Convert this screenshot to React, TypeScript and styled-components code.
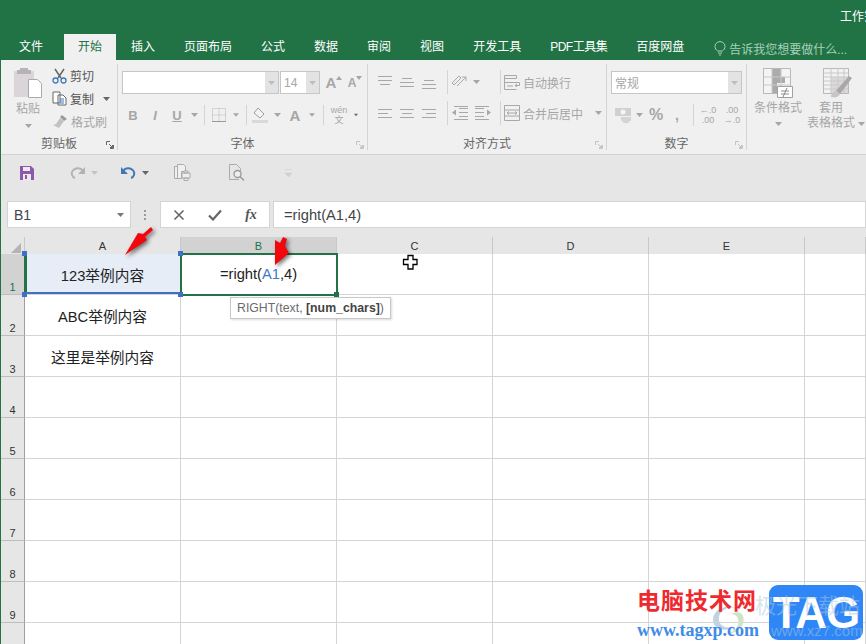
import React from 'react';
import styled, { createGlobalStyle } from 'styled-components';

const GlobalStyle = createGlobalStyle`
  html, body { margin: 0; padding: 0; background: #fff; overflow: hidden; }
  * { box-sizing: border-box; }
`;

const FONT = `"Liberation Sans", "Noto Sans CJK SC", sans-serif`;
const GREEN = '#217346';
const GRAY = '#a6a6a6';

const Page = styled.div`
  position: relative;
  width: 866px;
  height: 644px;
  overflow: hidden;
  background: #fff;
  font-family: ${FONT};
  border-left: 1px solid ${GREEN};
`;

const TitleBar = styled.div`
  height: 34px;
  background: ${GREEN};
  color: #fff;
  font-size: 12px;
  line-height: 34px;
  padding-left: 839px;
  white-space: nowrap;
  overflow: hidden;
`;

const TabBar = styled.div`
  height: 26px;
  background: ${GREEN};
  display: flex;
  gap: 1px;
  padding-left: 4px;
  align-items: stretch;
`;

const Tab = styled.div<{ $active?: boolean; $first?: boolean; $tight?: boolean }>`
  padding: 2px 14px 0;
  margin-right: ${(p) => (p.$first ? '6px' : '0')};
  font-size: 12px;
  line-height: 22px;
  white-space: nowrap;
  letter-spacing: ${(p) => (p.$tight ? '-0.5px' : '0')};
  color: ${(p) => (p.$active ? GREEN : '#fff')};
  background: ${(p) => (p.$active ? '#f0f0f0' : 'transparent')};
`;

const TellMe = styled.div`
  margin-left: 15px;
  display: flex;
  align-items: center;
  gap: 3px;
  padding-top: 2px;
  font-size: 12px;
  color: #a7d0ba;
  white-space: nowrap;
`;

const Ribbon = styled.div`
  height: 95px;
  background: #f0f0f0;
  border-bottom: 1px solid #d2d2d2;
  display: flex;
  padding-top: 4px;
`;

const Group = styled.div<{ $w: number }>`
  position: relative;
  flex: none;
  width: ${(p) => p.$w}px;
  height: 86px;
  border-right: 1px solid #d4d4d4;
  display: flex;
  flex-direction: column;
`;

const GroupBody = styled.div`
  flex: 1;
  display: flex;
  min-height: 0;
`;

const GroupLabel = styled.div`
  height: 14px;
  line-height: 16px;
  text-align: center;
  font-size: 12px;
  color: #666;
`;

const Launcher = styled.svg`
  position: absolute;
  right: 3px;
  bottom: 1px;
`;

const Column = styled.div<{ $w?: number; $pad?: number }>`
  display: flex;
  flex-direction: column;
  align-items: ${(p) => (p.$w ? 'center' : 'flex-start')};
  width: ${(p) => (p.$w ? `${p.$w}px` : 'auto')};
  padding-left: ${(p) => p.$pad ?? 0}px;
`;

const SmallRow = styled.div`
  height: 23px;
  display: flex;
  align-items: center;
  gap: 3px;
  font-size: 12px;
  color: ${GRAY};
  white-space: nowrap;
`;

const DarkLabel = styled.span`
  color: #555;
`;

const BigLabel = styled.div<{ $shift?: number }>`
  font-size: 12px;
  line-height: 15px;
  color: ${GRAY};
  text-align: center;
  white-space: nowrap;
  margin-right: ${(p) => p.$shift ?? 0}px;
`;

const Stack = styled.div<{ $top: number; $left: number; $gap: number }>`
  display: flex;
  flex-direction: column;
  gap: ${(p) => p.$gap}px;
  padding: ${(p) => p.$top}px 0 0 ${(p) => p.$left}px;
`;

const ToolRow = styled.div<{ $h?: number }>`
  height: ${(p) => p.$h ?? 22}px;
  display: flex;
  align-items: center;
`;

const Tool = styled.div<{ $w: number }>`
  flex: none;
  width: ${(p) => p.$w}px;
  display: flex;
  align-items: center;
  justify-content: center;
  color: ${GRAY};
  font-size: 12px;
  white-space: nowrap;
`;

const ToolText = styled.div<{ $w: number }>`
  flex: none;
  width: ${(p) => p.$w}px;
  color: ${GRAY};
  font-size: 12px;
  white-space: nowrap;
`;

const Letter = styled.span<{ $italic?: boolean; $under?: boolean; $size?: number }>`
  font-family: ${FONT};
  font-weight: 700;
  font-size: ${(p) => p.$size ?? 12}px;
  font-style: ${(p) => (p.$italic ? 'italic' : 'normal')};
  text-decoration: ${(p) => (p.$under ? 'underline' : 'none')};
  color: ${GRAY};
`;

const Wen = styled.div`
  font-size: 9px;
  line-height: 10px;
  text-align: center;
  color: ${GRAY};
  white-space: nowrap;
`;

const Sep = styled.div<{ $h?: number }>`
  flex: none;
  width: 1px;
  height: ${(p) => p.$h ?? 20}px;
  background: #d4d4d4;
`;

const Combo = styled.div<{ $w: number }>`
  flex: none;
  width: ${(p) => p.$w}px;
  height: 23px;
  background: #fff;
  border: 1px solid #c6c6c6;
  display: flex;
  align-items: center;
  justify-content: space-between;
  font-size: 12px;
  color: ${GRAY};
  padding-left: 3px;
`;

const ComboBtn = styled.div`
  width: 13px;
  height: 100%;
  flex: none;
  background: #e3e3e3;
  display: flex;
  align-items: center;
  justify-content: center;
`;

const QuickBar = styled.div`
  height: 45px;
  background: #e6e6e6;
  display: flex;
  align-items: flex-start;
  padding-top: 9px;
`;

const QuickSlot = styled.div<{ $left: number }>`
  margin-left: ${(p) => p.$left}px;
  height: 17px;
  display: flex;
  align-items: center;
  gap: 6px;
`;

const FormulaRow = styled.div`
  height: 37px;
  background: #e6e6e6;
  display: flex;
  align-items: flex-start;
  padding: 1px 0 0 6px;
`;

const FieldBox = styled.div<{ $w?: number; $ml: number }>`
  height: 27px;
  background: #fff;
  border: 1px solid #d4d4d4;
  margin-left: ${(p) => p.$ml}px;
  flex: ${(p) => (p.$w ? 'none' : '1')};
  width: ${(p) => (p.$w ? `${p.$w}px` : 'auto')};
  display: flex;
  align-items: center;
  font-size: 14px;
  color: #444;
`;

const NameText = styled.span`
  flex: 1;
  padding-left: 6px;
`;

const FormulaText = styled.span`
  padding-left: 10px;
  font-size: 14.7px;
`;

const Dots = styled.div`
  margin-left: 13px;
  height: 27px;
  display: flex;
  flex-direction: column;
  justify-content: center;
  gap: 2px;
  i {
    display: block;
    width: 2px;
    height: 2px;
    background: #9a9a9a;
  }
`;

const FxBtn = styled.div`
  width: 36px;
  display: flex;
  justify-content: center;
  color: #666;
`;

const Fx = styled.span`
  font-family: "Liberation Serif", serif;
  font-style: italic;
  font-weight: 700;
  font-size: 14px;
  color: #555;
`;

const Sheet = styled.div`
  display: grid;
  grid-template-columns: 24px repeat(5, 156px) 1fr;
  grid-template-rows: 17px;
  grid-auto-rows: 41px;
  background: #fff;
`;

const HeaderRow = styled.div`
  grid-column: 1 / -1;
  display: grid;
  grid-template-columns: 24px repeat(5, 156px) 1fr;
  background: #e6e6e6;
`;

const Corner = styled.div`
  border-bottom: 1px solid #9f9f9f;
  border-right: 1px solid #c8c8c8;
  display: flex;
  align-items: flex-end;
  justify-content: flex-end;
  padding: 0 3px 2px 0;
`;

const ColHead = styled.div<{ $on?: boolean }>`
  border-right: 1px solid #c8c8c8;
  border-bottom: 1px solid ${(p) => (p.$on ? GREEN : '#9f9f9f')};
  background: ${(p) => (p.$on ? '#d2d2d2' : '#e6e6e6')};
  color: ${(p) => (p.$on ? GREEN : '#333')};
  font-size: 11px;
  line-height: 18px;
  text-align: center;
`;

const RowHead = styled.div<{ $on?: boolean }>`
  background: ${(p) => (p.$on ? '#d2d2d2' : '#e6e6e6')};
  color: ${(p) => (p.$on ? GREEN : '#333')};
  border-right: 1px solid ${(p) => (p.$on ? GREEN : '#9f9f9f')};
  border-bottom: 1px solid #bdbdbd;
  font-size: 11px;
  text-align: center;
  display: flex;
  align-items: flex-end;
  justify-content: center;
  padding-bottom: 1px;
`;

const Cell = styled.div<{ $tone?: 'source' | 'edit' }>`
  position: relative;
  border-right: 1px solid #d4d4d4;
  border-bottom: 1px solid #d4d4d4;
  display: flex;
  align-items: center;
  justify-content: center;
  font-size: 14.7px;
  color: #222;
  white-space: nowrap;
  background: ${(p) => (p.$tone === 'source' ? '#e6edf7' : '#fff')};
  ${(p) =>
    p.$tone === 'source' &&
    `box-shadow: inset 2px 0 0 ${GREEN}, inset 0 -2px 0 #3f70c4;`}
  ${(p) => p.$tone === 'edit' && `outline: 2px solid ${GREEN}; outline-offset: -1px; z-index: 1;`}
`;

const Handle = styled.i<{ $x: 'left' | 'right'; $y: 'top' | 'bottom'; $color: string }>`
  position: absolute;
  ${(p) => p.$x}: -3px;
  ${(p) => p.$y}: -3px;
  width: 5px;
  height: 5px;
  background: ${(p) => p.$color};
  z-index: 2;
`;

const Ref = styled.span`
  color: #3f78cf;
`;

const Tooltip = styled.div`
  position: absolute;
  left: 229px;
  top: 297px;
  width: 161px;
  height: 22px;
  background: #fff;
  border: 1px solid #c8c8c8;
  box-shadow: 1px 1px 2px rgba(0, 0, 0, 0.15);
  font-size: 12.3px;
  line-height: 20px;
  padding-left: 6px;
  color: #6b6b6b;
  white-space: nowrap;
  z-index: 5;
  b {
    color: #444;
  }
`;

const Overlay = styled.svg<{ $x: number; $y: number; $shadow?: boolean }>`
  position: absolute;
  left: ${(p) => p.$x - 1}px;
  top: ${(p) => p.$y}px;
  z-index: 6;
  overflow: visible;
  ${(p) => p.$shadow && 'filter: drop-shadow(2px 2px 2px rgba(0, 0, 0, 0.55));'}
`;

const Watermark = styled.div`
  position: absolute;
  left: 636px;
  top: 585px;
  width: 226px;
  height: 56px;
  display: flex;
  z-index: 6;
`;

const WmText = styled.div`
  position: relative;
  width: 132px;
  flex: none;
`;

const WmTitle = styled.div`
  position: relative;
  margin-top: 2px;
  font-size: 23px;
  line-height: 28px;
  font-weight: 700;
  color: #ee2a2f;
  letter-spacing: 1px;
  white-space: nowrap;
`;

const WmUrl = styled.div`
  position: relative;
  margin-top: 4px;
  font-family: "Liberation Serif", serif;
  font-size: 18px;
  line-height: 22px;
  font-weight: 700;
  color: #3f8be8;
  white-space: nowrap;
`;

const WmSwirl = styled.svg`
  position: absolute;
  left: 72px;
  top: 15px;
`;

const WmGhost = styled.div<{ $left: number; $top: number; $size: number }>`
  position: absolute;
  left: ${(p) => p.$left}px;
  top: ${(p) => p.$top}px;
  font-size: ${(p) => p.$size}px;
  line-height: 1;
  color: rgba(170, 200, 220, 0.5);
  white-space: nowrap;
  z-index: 1;
`;

const Badge = styled.div`
  width: 94px;
  height: 55px;
  border-radius: 9px;
  background: #2f86f7;
  color: #fff;
  font-size: 44px;
  line-height: 55px;
  font-weight: 700;
  text-align: center;
  letter-spacing: -1px;
`;

const Caret = ({ c = GRAY }: { c?: string }) => (
  <svg width="7" height="4" viewBox="0 0 7 4"><path d="M0 0h7L3.5 4z" fill={c} /></svg>
);

const Lines = ({ w = [14, 14, 14], y = [2, 6, 10], c = '#a8a8a8', x = 0 }: { w?: number[]; y?: number[]; c?: string; x?: number | number[] }) => (
  <svg width="16" height="14" viewBox="0 0 16 14">
    {w.map((len, i) => {
      const left = Array.isArray(x) ? x[i] : x;
      return <path key={i} d={`M${left} ${y[i] + 0.5}h${len}`} stroke={c} fill="none" />;
    })}
  </svg>
);

const LaunchIcon = ({ c = '#8c8c8c' }: { c?: string }) => (
  <Launcher width="8" height="8" viewBox="0 0 8 8">
    <path d="M.5 4V.5H4M7.5 4v3.5H4M3 3l3.5 3.5M4 6.5h2.5V4" stroke={c} fill="none" />
  </Launcher>
);

const Indent = ({ flip }: { flip?: boolean }) => (
  <svg width="16" height="14" viewBox="0 0 16 14" style={flip ? { transform: 'scaleX(-1)' } : undefined}>
    <path d="M7 2.5h9M7 6.5h9M7 10.5h9M2 13.5h14M2 .5h14" stroke="#a8a8a8" fill="none" />
    <path d="M0 6.5l4-3v6z" fill="#a8a8a8" />
  </svg>
);

const tabs = ['插入', '页面布局', '公式', '数据', '审阅', '视图', '开发工具', 'PDF工具集', '百度网盘'];
const columns = ['A', 'B', 'C', 'D', 'E', ''];
const rows = [1, 2, 3, 4, 5, 6, 7, 8, 9, 10];
const firstColumn: Record<number, string> = { 1: '123举例内容', 2: 'ABC举例内容', 3: '这里是举例内容' };

export default function App() {
  return (
    <Page>
      <GlobalStyle />
      <TitleBar>工作簿1 - Excel</TitleBar>
      <TabBar>
        <Tab $first>文件</Tab>
        <Tab $active>开始</Tab>
        {tabs.map((t) => <Tab key={t} $tight={t.startsWith('PDF')}>{t}</Tab>)}
        <TellMe>
          <svg width="12" height="15" viewBox="0 0 12 15">
            <path d="M3.5 10C2 8.8 1 7.4 1 5.6a5 5 0 0 1 10 0c0 1.8-1 3.200-2.500 4.400zM4 12h4M5 14h2" stroke="#a7d0ba" fill="none" />
          </svg>
          告诉我您想要做什么...
        </TellMe>
      </TabBar>

      <Ribbon>
        <Group $w={117}>
          <GroupBody>
            <Column $w={48} $pad={0}>
              <svg width="30" height="32" viewBox="0 0 30 32" style={{ marginTop: 3, marginLeft: 6 }}>
                <path d="M1 4h20v26H1z" fill="#d9d5d8" />
                <path d="M7 1h8v2h3v4H4V3h3z" fill="#b6b2b5" />
                <path d="M15.500 12.500h9l4 4v14h-13z" fill="#fff" stroke="#aaa" />
              </svg>
              <BigLabel style={{ marginTop: 3, marginLeft: 6 }}>粘贴</BigLabel>
              <div style={{ marginTop: 6, marginLeft: 6, lineHeight: 0 }}><Caret /></div>
            </Column>
            <Column $pad={3}>
              <SmallRow>
                <svg width="15" height="16" viewBox="0 0 15 16">
                  <path d="M3 1l6 9M12 1L6 10" stroke="#666" strokeWidth="1.500" fill="none" />
                  <circle cx="3.500" cy="12.500" r="2.500" stroke="#3f78b8" strokeWidth="1.300" fill="none" />
                  <circle cx="11.500" cy="12.500" r="2.500" stroke="#3f78b8" strokeWidth="1.300" fill="none" />
                </svg>
                <DarkLabel>剪切</DarkLabel>
              </SmallRow>
              <SmallRow>
                <svg width="15" height="15" viewBox="0 0 15 15">
                  <path d="M1 1h7v11H1zM6 4h5l3 3v7H6z" fill="#fff" stroke="#666" />
                  <path d="M8 8h4M8 10h4M8 12h4" stroke="#3f78b8" />
                </svg>
                <DarkLabel>复制</DarkLabel>
                <span style={{ marginLeft: 6, lineHeight: 0 }}><Caret c="#666" /></span>
              </SmallRow>
              <SmallRow>
                <svg width="16" height="15" viewBox="0 0 16 15">
                  <path d="M10 1l5 4-3 2-4-4z" fill="#9a9a9a" />
                  <path d="M8 4l4 3-5 7-6-3 3-1z" fill="#c2c2c2" />
                </svg>
                格式刷
              </SmallRow>
            </Column>
          </GroupBody>
          <GroupLabel>剪贴板</GroupLabel>
          <LaunchIcon c="#666" />
        </Group>

        <Group $w={250}>
          <GroupBody>
            <Stack $top={7} $left={4} $gap={10}>
              <ToolRow $h={23}>
                <Combo $w={157}><span /><ComboBtn><Caret c="#bdbdbd" /></ComboBtn></Combo>
                <Combo $w={40} style={{ marginLeft: 1 }}>
                  <span>14</span><ComboBtn><Caret c="#bdbdbd" /></ComboBtn>
                </Combo>
                <Tool $w={22} style={{ marginLeft: 3 }}>
                  <Letter $size={15}>A</Letter>
                  <svg width="6" height="4" viewBox="0 0 6 4" style={{ marginBottom: 10 }}><path d="M0 4l3-4 3 4z" fill={GRAY} /></svg>
                </Tool>
                <Tool $w={20}>
                  <Letter $size={12}>A</Letter>
                  <svg width="6" height="4" viewBox="0 0 6 4" style={{ marginBottom: 10 }}><path d="M0 0h6L3 4z" fill={GRAY} /></svg>
                </Tool>
              </ToolRow>
              <ToolRow>
                <Tool $w={22}><Letter $size={13}>B</Letter></Tool>
                <Tool $w={22}><Letter $size={13} $italic>I</Letter></Tool>
                <Tool $w={22}><Letter $size={13} $under>U</Letter></Tool>
                <Tool $w={12}><Caret /></Tool>
                <Tool $w={4} /><Sep />
                <Tool $w={28}>
                  <svg width="14" height="14" viewBox="0 0 14 14">
                    <path d="M.5.5h13v13H.5zM7 .5v13M.5 7h13" stroke="#b5b5b5" strokeDasharray="1 1" fill="none" />
                    <path d="M0 13.500h14" stroke="#999" />
                  </svg>
                </Tool>
                <Tool $w={6}><Caret /></Tool>
                <Tool $w={7} /><Sep />
                <Tool $w={26}>
                  <svg width="16" height="16" viewBox="0 0 16 16">
                    <path d="M6 1l6 6-4 4-6-5z" fill="#f4f4f4" stroke="#9c9c9c" />
                    <path d="M0 13h16v3H0z" fill="#d9d9d9" />
                  </svg>
                </Tool>
                <Tool $w={8}><Caret /></Tool>
                <Tool $w={28}><Letter $size={15}>A</Letter></Tool>
                <Tool $w={6}><Caret /></Tool>
                <Tool $w={8} /><Sep />
                <Tool $w={30}><Wen>wén<br />文</Wen></Tool>
                <Tool $w={4}><Caret c="#666" /></Tool>
              </ToolRow>
            </Stack>
          </GroupBody>
          <GroupLabel>字体</GroupLabel>
          <LaunchIcon c="#c4c4c4" />
        </Group>

        <Group $w={239}>
          <GroupBody>
            <Stack $top={5} $left={7} $gap={5}>
              <ToolRow $h={26}>
                <Tool $w={22}><Lines y={[1, 5, 9]} w={[14, 14, 10]} x={[0, 0, 2]} /></Tool>
                <Tool $w={22}><Lines y={[3, 7, 11]} w={[10, 14, 14]} x={[2, 0, 0]} /></Tool>
                <Tool $w={22}><Lines y={[5, 9, 13]} w={[10, 14, 14]} x={[2, 0, 0]} /></Tool>
                <Tool $w={6} /><Sep $h={24} />
                <Tool $w={24}>
                  <svg width="18" height="16" viewBox="0 0 18 16">
                    <path d="M1 9l7-7 2 2-7 7zM6 12l9-9M11 3h4v4" stroke="#a8a8a8" fill="none" />
                  </svg>
                </Tool>
                <Tool $w={8}><Caret /></Tool>
                <Tool $w={20} /><Sep $h={24} />
                <Tool $w={22}>
                  <svg width="17" height="15" viewBox="0 0 17 15">
                    <path d="M.5.5h12v3H.5zM.5 3.500v11h12M.5 7.500h12M3 11h6M11 7.500h4.500v3H11M13 9l-2 1.500 2 1.500" stroke="#a8a8a8" fill="none" />
                  </svg>
                </Tool>
                <ToolText $w={52}>自动换行</ToolText>
              </ToolRow>
              <ToolRow $h={26}>
                <Tool $w={22}><Lines y={[3, 7, 11]} w={[14, 10, 14]} /></Tool>
                <Tool $w={22}><Lines y={[3, 7, 11]} w={[14, 10, 14]} x={[0, 2, 0]} /></Tool>
                <Tool $w={22}><Lines y={[3, 7, 11]} w={[14, 10, 14]} x={[0, 4, 0]} /></Tool>
                <Tool $w={6} /><Sep $h={24} />
                <Tool $w={24}><Indent /></Tool>
                <Tool $w={22}><Indent flip /></Tool>
                <Tool $w={6} /><Sep $h={24} />
                <Tool $w={22}>
                  <svg width="16" height="16" viewBox="0 0 16 16">
                    <path d="M.5.500h15v15H.500zM.5 5h15M.5 11h15M3 8h10M3 8l2-1.500M3 8l2 1.500M13 8l-2-1.500M13 8l-2 1.500" stroke="#a8a8a8" fill="none" />
                  </svg>
                </Tool>
                <ToolText $w={72}>合并后居中</ToolText>
                <Tool $w={7}><Caret /></Tool>
              </ToolRow>
            </Stack>
          </GroupBody>
          <GroupLabel>对齐方式</GroupLabel>
          <LaunchIcon c="#c4c4c4" />
        </Group>

        <Group $w={140}>
          <GroupBody>
            <Stack $top={7} $left={4} $gap={10}>
              <ToolRow $h={23}>
                <Combo $w={131}><span>常规</span><ComboBtn><Caret c="#bdbdbd" /></ComboBtn></Combo>
              </ToolRow>
              <ToolRow>
                <Tool $w={24}>
                  <svg width="17" height="17" viewBox="0 0 17 17">
                    <path d="M0 1h16v8H0z" fill="#d0d0d0" />
                    <circle cx="8" cy="5" r="2.500" fill="#f4f4f4" />
                    <path d="M6 11h10M6 13h10M8 15h6" stroke="#b8b8b8" />
                  </svg>
                </Tool>
                <Tool $w={8}><Caret /></Tool>
                <Tool $w={26}><Letter $size={16}>%</Letter></Tool>
                <Tool $w={16}><Letter $size={14}>,</Letter></Tool>
                <Tool $w={8} /><Sep $h={22} />
                <Tool $w={28}><Wen>←.0<br />.00</Wen></Tool>
                <Tool $w={20}><Wen>.00<br />→.0</Wen></Tool>
              </ToolRow>
            </Stack>
          </GroupBody>
          <GroupLabel>数字</GroupLabel>
          <LaunchIcon c="#c4c4c4" />
        </Group>

        <GroupBody>
          <Column $w={62}>
            <svg width="30" height="30" viewBox="0 0 30 30" style={{ marginTop: 4 }}>
              <path d="M.5.5h27v25H.5z" fill="#f4f4f4" stroke="#b8b8b8" />
              <path d="M9 1h9v8H9zM9 9h13v6H9zM9 15h5v10H9z" fill="#ababab" />
              <path d="M.5 9h27M.5 17h27M9 .5v25M18 .5v25" stroke="#c8c8c8" fill="none" />
              <path d="M14.500 18.500h15v11h-15z" fill="#fff" stroke="#a0a0a0" />
              <path d="M18 23h8M18 26h8M24 20l-4 9" stroke="#8a8a8a" />
            </svg>
            <BigLabel style={{ marginTop: 3 }}>条件格式</BigLabel>
            <div style={{ marginTop: 5, lineHeight: 0 }}><Caret /></div>
          </Column>
          <Column $w={58}>
            <svg width="30" height="30" viewBox="0 0 30 30" style={{ marginTop: 4 }}>
              <path d="M.5.5h25v25H.5z" fill="#f2f2f2" stroke="#b8b8b8" />
              <path d="M8 9h17v16H8z" fill="#dcd8da" />
              <path d="M.5 5h25M.5 9h25M.5 13h25M.5 17h25M.5 21h25M8 .5v25M15 .5v25M21 .5v25" stroke="#c9c9c9" fill="none" />
              <path d="M12 24l14-16 3 2-12 16z" fill="#a8a8a8" />
              <path d="M8 29c0-4 3-6 6-6l3 3c-1 3-5 4-9 3z" fill="#c6c6c6" />
            </svg>
            <BigLabel $shift={14} style={{ marginTop: 3 }}>
              套用<br />表格格式
              <span style={{ display: 'inline-block', width: 0, verticalAlign: 'middle', lineHeight: 0 }}>
                <svg width="7" height="4" viewBox="0 0 7 4" style={{ marginLeft: 3 }}><path d="M0 0h7L3.5 4z" fill={GRAY} /></svg>
              </span>
            </BigLabel>
          </Column>
        </GroupBody>
      </Ribbon>

      <QuickBar>
        <QuickSlot $left={19}>
          <svg width="14" height="14" viewBox="0 0 14 14">
            <path d="M0 0h11l3 3v11H0z" fill="#8b5aa8" />
            <path d="M3 1h7v4H3z" fill="#efe8f3" />
            <path d="M3 8h8v6H3z" fill="#efe8f3" />
            <path d="M5 9h2v4H5z" fill="#8b5aa8" />
          </svg>
        </QuickSlot>
        <QuickSlot $left={36}>
          <svg width="15" height="13" viewBox="0 0 15 13">
            <path d="M14 7C13 3 9 1.500 6 2.500 3 3.500 1 6 2 9c.5 1.500 1.500 2.500 3 3" stroke="#b3b3b3" strokeWidth="2" fill="none" />
            <path d="M15 1v7H8z" fill="#b3b3b3" />
          </svg>
          <Caret c="#c4c4c4" />
        </QuickSlot>
        <QuickSlot $left={23}>
          <svg width="15" height="13" viewBox="0 0 15 13">
            <path d="M1 7c1-4 5-5.500 8-4.500 3 1 5 3.500 4 6.500-.5 1.500-1.500 2.500-3 3" stroke="#3f78b8" strokeWidth="2" fill="none" />
            <path d="M0 1v7h7z" fill="#3f78b8" />
          </svg>
          <Caret c="#666" />
        </QuickSlot>
        <QuickSlot $left={25}>
          <svg width="17" height="17" viewBox="0 0 17 17">
            <path d="M.5 2.500h3v12h-3zM3.500.5h6l2 2v5h-4v7h-4z" fill="#f0f0f0" stroke="#aaa" />
            <path d="M8 9h8v5H8zM10 7h4v2h-4zM10 14h4v2.500h-4z" fill="#eee" stroke="#aaa" />
          </svg>
        </QuickSlot>
        <QuickSlot $left={38}>
          <svg width="16" height="17" viewBox="0 0 16 17">
            <path d="M10 15.500H.5V.5h7l4 4v3" fill="none" stroke="#aaa" />
            <circle cx="8.500" cy="10" r="3.500" fill="#eee" stroke="#999" strokeWidth="1.300" />
            <path d="M11 12.500l4 4" stroke="#999" strokeWidth="1.500" />
          </svg>
        </QuickSlot>
        <QuickSlot $left={40}>
          <svg width="7" height="8" viewBox="0 0 7 8"><path d="M0 .5h7M0 4h7l-3.500 4z" stroke="#d0d0d0" fill="#d0d0d0" strokeWidth=".6" /></svg>
        </QuickSlot>
      </QuickBar>

      <FormulaRow>
        <FieldBox $w={124} $ml={0}>
          <NameText>B1</NameText>
          <span style={{ marginRight: 6, lineHeight: 0 }}><Caret c="#777" /></span>
        </FieldBox>
        <Dots><i /><i /><i /></Dots>
        <FieldBox $w={110} $ml={14}>
          <FxBtn>
            <svg width="12" height="12" viewBox="0 0 12 12"><path d="M1.500 1.500l9 9M10.500 1.500l-9 9" stroke="#666" strokeWidth="1.600" /></svg>
          </FxBtn>
          <FxBtn>
            <svg width="14" height="12" viewBox="0 0 14 12"><path d="M1 6.500l4 4 8-9" stroke="#666" strokeWidth="2.200" fill="none" /></svg>
          </FxBtn>
          <FxBtn><Fx>fx</Fx></FxBtn>
        </FieldBox>
        <FieldBox $ml={3}>
          <FormulaText>=right(A1,4)</FormulaText>
        </FieldBox>
      </FormulaRow>

      <Sheet>
        <HeaderRow>
          <Corner>
            <svg width="10" height="10" viewBox="0 0 10 10"><path d="M10 0v10H0z" fill="#b4b4b4" /></svg>
          </Corner>
          {columns.map((c, i) => <ColHead key={i} $on={c === 'B'}>{c}</ColHead>)}
        </HeaderRow>
        {rows.map((r) => (
          <React.Fragment key={r}>
            <RowHead $on={r === 1}>{r < 10 ? r : ''}</RowHead>
            <Cell $tone={r === 1 ? 'source' : undefined}>
              {firstColumn[r]}
              {r === 1 && (
                <>
                  <Handle $x="left" $y="top" $color="#3f70c4" />
                  <Handle $x="right" $y="top" $color="#3f70c4" />
                  <Handle $x="left" $y="bottom" $color="#3f70c4" />
                  <Handle $x="right" $y="bottom" $color="#3f70c4" />
                </>
              )}
            </Cell>
            <Cell $tone={r === 1 ? 'edit' : undefined}>
              {r === 1 && <span>=right(<Ref>A1</Ref>,4)</span>}
              {r === 1 && <Handle $x="right" $y="bottom" $color={GREEN} />}
            </Cell>
            <Cell /><Cell /><Cell /><Cell />
          </React.Fragment>
        ))}
      </Sheet>

      <Tooltip>RIGHT(text, <b>[num_chars]</b>)</Tooltip>

      <Overlay $x={120} $y={224} $shadow width="36" height="34" viewBox="0 0 36 34">
        <path d="M31 3l2 3-8 7 2 3-22 15 13-22 5 1z" fill="#f2070d" />
      </Overlay>
      <Overlay $x={270} $y={234} $shadow width="22" height="34" viewBox="0 0 22 34">
        <path d="M5 31V6l5 3 3-6 4 2-2 7 4 7z" fill="#f2070d" />
      </Overlay>
      <Overlay $x={403} $y={255} width="15" height="15" viewBox="0 0 15 15">
        <path d="M5 .5h5v4h4v5h-4v4.500H5V9.500H.5v-5H5z" fill="#fff" stroke="#000" strokeWidth="1.300" />
      </Overlay>

      <Watermark>
        <WmText>
          <WmSwirl width="38" height="38" viewBox="0 0 38 38">
            <path d="M4 20C4 9 16 4 28 8 18 6 9 11 10 20c1 7 9 9 14 6-3 6-20 5-20-6z" fill="#c2d3e0" />
            <path d="M34 16c3 10-6 18-17 18 9-2 14-8 12-15-1-4-4-5-7-5 5-3 11-2 12 2z" fill="#cfe3c6" />
          </WmSwirl>
          <WmTitle>电脑技术网</WmTitle>
          <WmUrl>www.tagxp.com</WmUrl>
        </WmText>
        <Badge>TAG</Badge>
        <WmGhost $left={118} $top={10} $size={21}>极光下载站</WmGhost>
        <WmGhost $left={134} $top={38} $size={15}>www.xz7.com</WmGhost>
      </Watermark>
    </Page>
  );
}
